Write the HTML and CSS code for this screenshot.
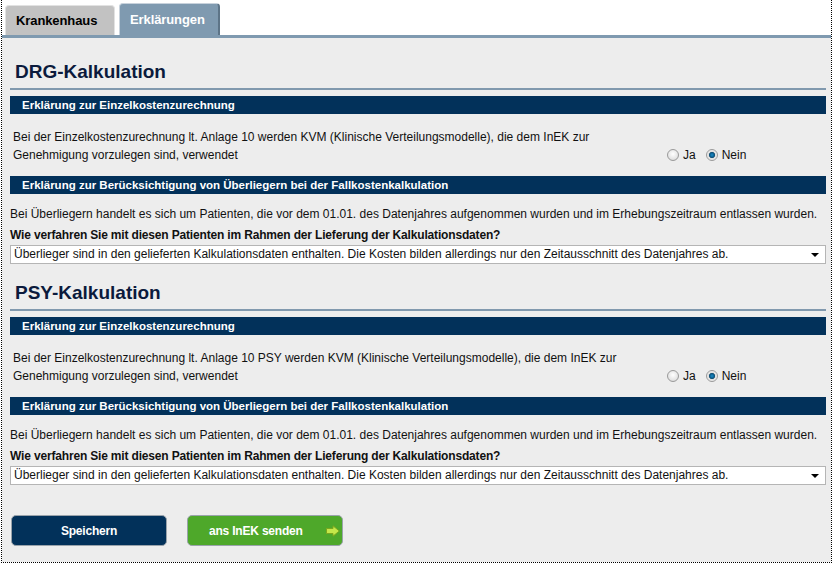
FILE: index.html
```html
<!DOCTYPE html>
<html lang="de">
<head>
<meta charset="utf-8">
<title>Erklärungen</title>
<link rel="stylesheet" href="styles.css">
</head>
<body>
<div class="frame">
  <div class="tabs">
    <div class="tab">Krankenhaus</div>
    <div class="tab active">Erklärungen</div>
  </div>
  <div class="content">
    <h2 class="title first">DRG-Kalkulation</h2>
    <div class="bar">Erklärung zur Einzelkostenzurechnung</div>
    <div class="row">
      <div class="rowtext">Bei der Einzelkostenzurechnung lt. Anlage 10 werden KVM (Klinische Verteilungsmodelle), die dem InEK zur Genehmigung vorzulegen sind, verwendet</div>
      <div class="radios">
        <span class="radio"></span><span class="rlabel">Ja</span>
        <span class="radio checked"></span><span class="rlabel">Nein</span>
      </div>
    </div>
    <div class="bar">Erklärung zur Berücksichtigung von Überliegern bei der Fallkostenkalkulation</div>
    <p class="info">Bei Überliegern handelt es sich um Patienten, die vor dem 01.01. des Datenjahres aufgenommen wurden und im Erhebungszeitraum entlassen wurden.</p>
    <p class="question">Wie verfahren Sie mit diesen Patienten im Rahmen der Lieferung der Kalkulationsdaten?</p>
    <div class="select"><span>Überlieger sind in den gelieferten Kalkulationsdaten enthalten. Die Kosten bilden allerdings nur den Zeitausschnitt des Datenjahres ab.</span><span class="caret"></span></div>

    <h2 class="title">PSY-Kalkulation</h2>
    <div class="bar">Erklärung zur Einzelkostenzurechnung</div>
    <div class="row">
      <div class="rowtext">Bei der Einzelkostenzurechnung lt. Anlage 10 PSY werden KVM (Klinische Verteilungsmodelle), die dem InEK zur Genehmigung vorzulegen sind, verwendet</div>
      <div class="radios">
        <span class="radio"></span><span class="rlabel">Ja</span>
        <span class="radio checked"></span><span class="rlabel">Nein</span>
      </div>
    </div>
    <div class="bar">Erklärung zur Berücksichtigung von Überliegern bei der Fallkostenkalkulation</div>
    <p class="info">Bei Überliegern handelt es sich um Patienten, die vor dem 01.01. des Datenjahres aufgenommen wurden und im Erhebungszeitraum entlassen wurden.</p>
    <p class="question">Wie verfahren Sie mit diesen Patienten im Rahmen der Lieferung der Kalkulationsdaten?</p>
    <div class="select"><span>Überlieger sind in den gelieferten Kalkulationsdaten enthalten. Die Kosten bilden allerdings nur den Zeitausschnitt des Datenjahres ab.</span><span class="caret"></span></div>

    <div class="buttons">
      <button class="btn save">Speichern</button>
      <button class="btn send">ans InEK senden
        <svg class="arrow" width="14" height="12" viewBox="0 0 14 12"><polygon points="0.5,3.5 7,3.5 7,0.8 13.3,6 7,11.2 7,8.5 0.5,8.5" fill="#c4e84a" stroke="#7aa61e" stroke-width="1"/></svg>
      </button>
    </div>
  </div>
</div>
</body>
</html>
```
FILE: styles.css
```css
html, body {
  margin: 0;
  padding: 0;
  background: #fff;
  font-family: "Liberation Sans", Arial, sans-serif;
  font-size: 12px;
  color: #111;
}
.frame {
  margin-left: 1px;
  width: 829px;
  height: 562px;
  border-left: 1px dotted #000;
  border-right: 1px dotted #000;
  border-bottom: 1px dotted #000;
  display: flex;
  flex-direction: column;
}
.tabs {
  display: flex;
  align-items: flex-end;
  gap: 4px;
  padding-left: 3px;
  height: 35px;
  border-bottom: 3px solid #7f9ab0;
}
.tab {
  height: 29px;
  line-height: 30px;
  padding: 0 10px;
  font-size: 13px;
  font-weight: bold;
  color: #000;
  background: #c2c2c2;
  border: 1px solid #e2e2e2;
  border-bottom: none;
  border-radius: 4px 4px 0 0;
  box-sizing: content-box;
  width: 88px;
  letter-spacing: -0.1px;
}
.tab.active {
  width: 78px;
  height: 31px;
  line-height: 31px;
  background: #7f9ab0;
  color: #fff;
  border-color: #c8d2dc;
  border-right: 2px solid #5d7487;
}
.content {
  flex: 1;
  background: #ededed;
  padding: 0 5px 0 8px;
}
.title {
  margin: 18px 0 6px 0;
  padding: 0 0 5px 5px;
  font-size: 19px;
  line-height: 22px;
  font-weight: bold;
  color: #0b1a3c;
  border-bottom: 2px solid #8199ae;
}
.title.first {
  margin-top: 23px;
}
.bar {
  height: 18px;
  line-height: 18px;
  background: #02315a;
  color: #fff;
  font-size: 11.5px;
  font-weight: bold;
  padding-left: 12px;
}
.row {
  display: flex;
  align-items: flex-end;
  margin: 14px 0 12px 0;
  padding-left: 3px;
}
.rowtext {
  width: 654px;
  line-height: 18px;
}
.radios {
  display: flex;
  align-items: center;
  height: 18px;
}
.radio {
  width: 10px;
  height: 10px;
  border-radius: 50%;
  border: 1px solid #9a9a9a;
  background: radial-gradient(circle at 50% 40%, #fff 0%, #e6e6e6 60%, #cfcfcf 100%);
}
.radio.checked {
  background: radial-gradient(circle, #1f8ec9 0%, #0a5e8e 30%, #1a4f70 40%, #dcdcdc 45%, #ffffff 100%);
}
.rlabel {
  margin: 0 10px 0 4px;
  font-size: 12px;
  color: #111;
}
.info {
  margin: 11px 0 0 0;
  line-height: 18px;
}
.question {
  margin: 3px 0 1px 0;
  line-height: 18px;
  font-weight: bold;
  letter-spacing: -0.17px;
}
.select {
  height: 17px;
  line-height: 17px;
  border: 1px solid #b5b5b5;
  background: #fff;
  display: flex;
  justify-content: space-between;
  align-items: center;
  padding: 0 6px 0 3px;
}
.caret {
  width: 0;
  height: 0;
  border-left: 4px solid transparent;
  border-right: 4px solid transparent;
  border-top: 4px solid #000;
}
.buttons {
  display: flex;
  gap: 20px;
  margin-top: 30px;
  padding-left: 1px;
}
.btn {
  width: 156px;
  height: 31px;
  border-radius: 5px;
  border: 1px solid #9aa3ab;
  color: #fff;
  font-family: "Liberation Sans", Arial, sans-serif;
  font-size: 12px;
  font-weight: bold;
  letter-spacing: -0.2px;
  display: flex;
  align-items: center;
  justify-content: center;
  padding: 0;
  position: relative;
}
.save {
  background: #02315a;
}
.send {
  background: #4ea82a;
  justify-content: flex-start;
  padding-left: 21px;
}
.arrow {
  position: absolute;
  right: 2px;
  top: 9px;
}
```
